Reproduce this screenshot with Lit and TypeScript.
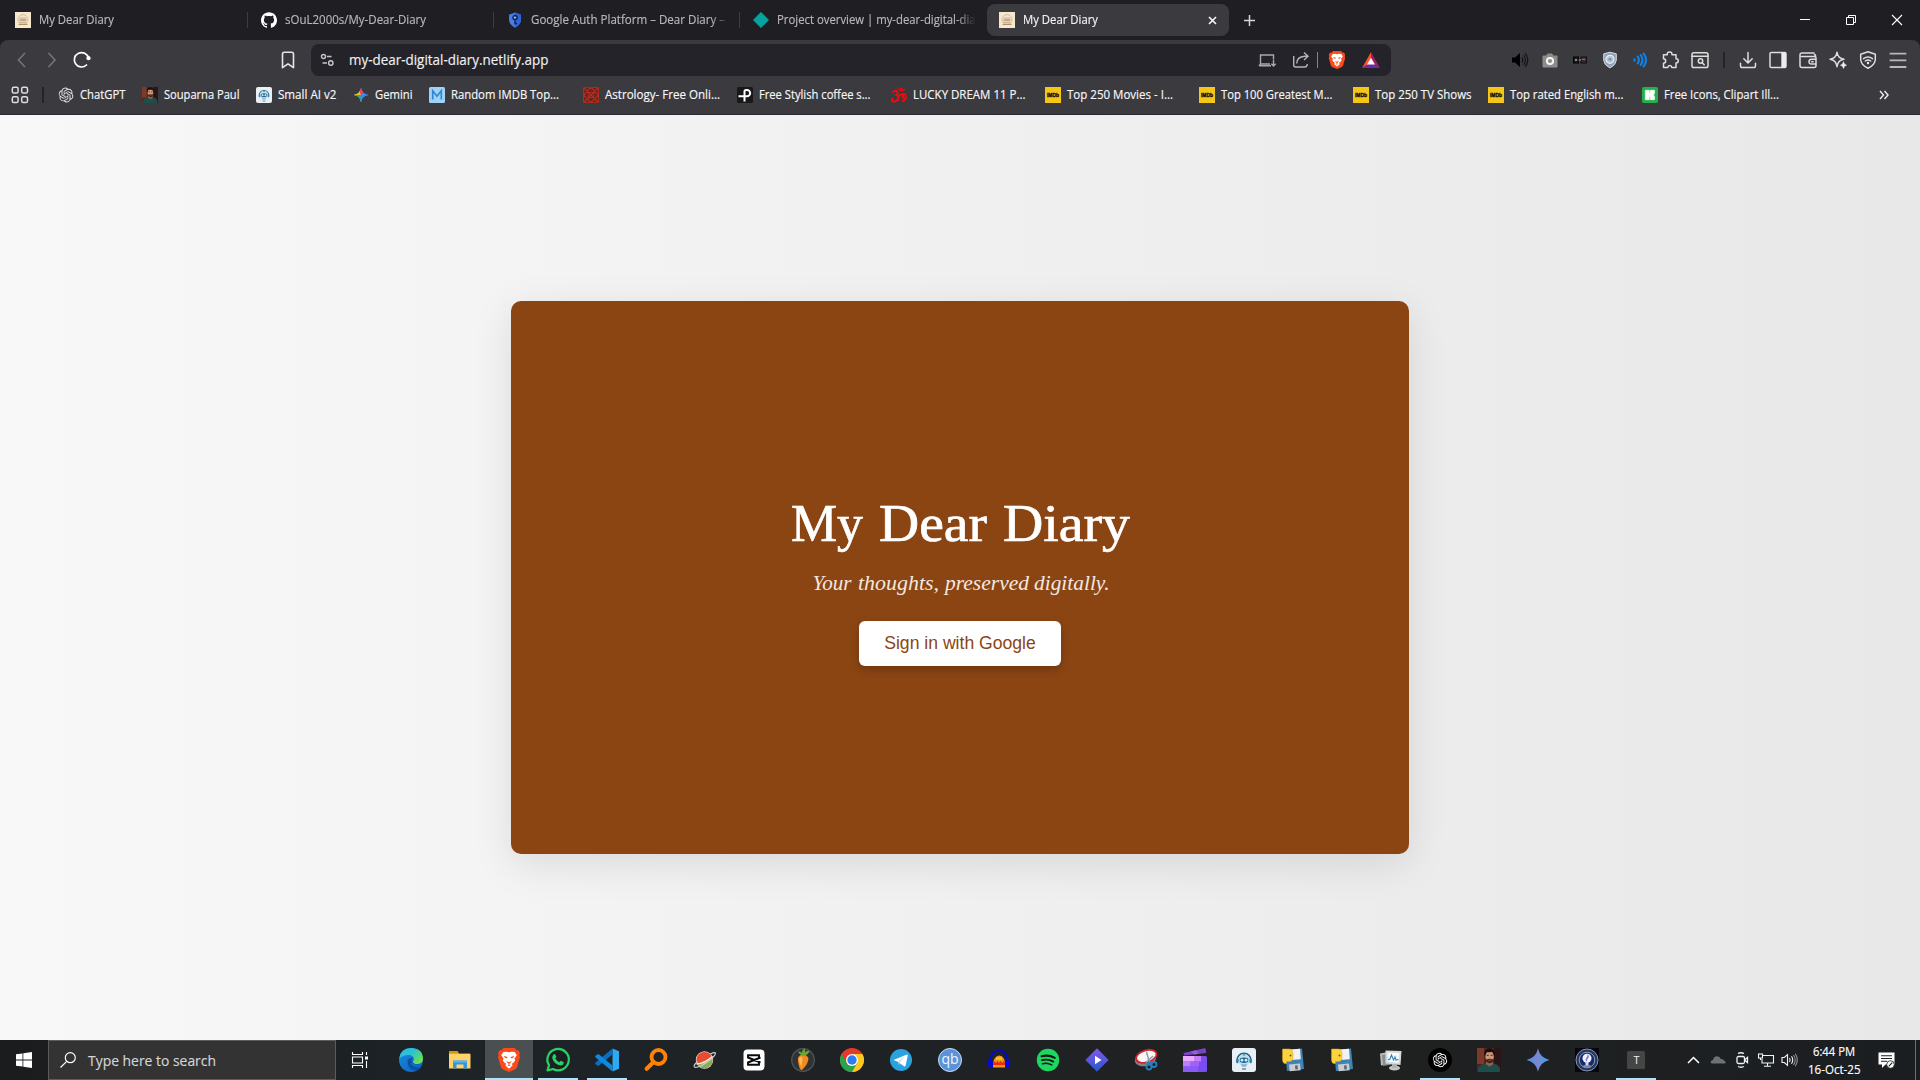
import { LitElement, html, svg, css } from "lit";
import { customElement } from "lit/decorators.js";

const icon = (size: number, box: number, body: unknown) =>
  html`<svg class="ico" width=${size} height=${size} viewBox="0 0 ${box} ${box}">${body}</svg>`;

/* A single line of UI text set to an exact advance width. */
const line = (text: string, width: number, cls = "") =>
  html`<svg class="line ${cls}" width=${width} height="16"><text x="0" y="12" textLength=${width} lengthAdjust="spacingAndGlyphs">${text}</text></svg>`;

const OPENAI =
  "M22.2819 9.8211a5.9847 5.9847 0 0 0-.5157-4.9108 6.0462 6.0462 0 0 0-6.5098-2.9A6.0651 6.0651 0 0 0 4.9807 4.1818a5.9847 5.9847 0 0 0-3.9977 2.9 6.0462 6.0462 0 0 0 .7427 7.0966 5.98 5.98 0 0 0 .511 4.9107 6.051 6.051 0 0 0 6.5146 2.9001A5.9847 5.9847 0 0 0 13.2599 24a6.0557 6.0557 0 0 0 5.7718-4.2058 5.9894 5.9894 0 0 0 3.9977-2.9001 6.0557 6.0557 0 0 0-.7475-7.0729zm-9.022 12.6081a4.4755 4.4755 0 0 1-2.8764-1.0408l.1419-.0804 4.7783-2.7582a.7948.7948 0 0 0 .3927-.6813v-6.7369l2.02 1.1686a.071.071 0 0 1 .038.052v5.5826a4.504 4.504 0 0 1-4.4945 4.4944zm-9.6607-4.1254a4.4708 4.4708 0 0 1-.5346-3.0137l.142.0852 4.783 2.7582a.7712.7712 0 0 0 .7806 0l5.8428-3.3685v2.3324a.0804.0804 0 0 1-.0332.0615L9.74 19.9502a4.4992 4.4992 0 0 1-6.1408-1.6464zM2.3408 7.8956a4.485 4.485 0 0 1 2.3655-1.9728V11.6a.7664.7664 0 0 0 .3879.6765l5.8144 3.3543-2.0201 1.1685a.0757.0757 0 0 1-.071 0l-4.8303-2.7865A4.504 4.504 0 0 1 2.3408 7.872zm16.5963 3.8558L13.1038 8.364 15.1192 7.2a.0757.0757 0 0 1 .071 0l4.8303 2.7913a4.4944 4.4944 0 0 1-.6765 8.1042v-5.6772a.79.79 0 0 0-.407-.667zm2.0107-3.0231l-.142-.0852-4.7735-2.7818a.7759.7759 0 0 0-.7854 0L9.409 9.2297V6.8974a.0662.0662 0 0 1 .0284-.0615l4.8303-2.7866a4.4992 4.4992 0 0 1 6.6802 4.66zM8.3065 12.863l-2.02-1.1638a.0804.0804 0 0 1-.038-.0567V6.0742a4.4992 4.4992 0 0 1 7.3757-3.4537l-.142.0805L8.704 5.459a.7948.7948 0 0 0-.3927.6813zm1.0976-2.3654l2.602-1.4998 2.6069 1.4998v2.9994l-2.5974 1.4997-2.6067-1.4997Z";
const GITHUB =
  "M12 .297c-6.63 0-12 5.373-12 12 0 5.303 3.438 9.8 8.205 11.385.6.113.82-.258.82-.577 0-.285-.01-1.04-.015-2.04-3.338.724-4.042-1.61-4.042-1.61C4.422 18.07 3.633 17.7 3.633 17.7c-1.087-.744.084-.729.084-.729 1.205.084 1.838 1.236 1.838 1.236 1.07 1.835 2.809 1.305 3.495.998.108-.776.417-1.305.76-1.605-2.665-.3-5.466-1.332-5.466-5.93 0-1.31.465-2.38 1.235-3.22-.135-.303-.54-1.523.105-3.176 0 0 1.005-.322 3.3 1.23.96-.267 1.98-.399 3-.405 1.02.006 2.04.138 3 .405 2.28-1.552 3.285-1.23 3.285-1.23.645 1.653.24 2.873.12 3.176.765.84 1.23 1.91 1.23 3.22 0 4.61-2.805 5.625-5.475 5.92.42.36.81 1.096.81 2.22 0 1.606-.015 2.896-.015 3.286 0 .315.21.69.825.57C20.565 22.092 24 17.592 24 12.297c0-6.627-5.373-12-12-12";

/* ---------- shared artwork ---------- */
const robot = svg`
  <rect width="24" height="24" rx="3" fill="#e8f0f6"/>
  <path d="M5 12.500a7 7.300 0 0 1 14 0" fill="none" stroke="#255a7c" stroke-width="1.600"/>
  <circle cx="12" cy="12" r="6" fill="#bfe0f2"/>
  <rect x="4" y="10.500" width="2.600" height="4.800" rx="1.200" fill="#2f87b4"/><rect x="17.400" y="10.500" width="2.600" height="4.800" rx="1.200" fill="#2f87b4"/>
  <path d="M7.800 10.500q4.200-2 8.400 0v3.200q-4.200 2.600-8.400 0z" fill="#2b6488"/>
  <circle cx="10" cy="12.200" r="1.400" fill="#c8f5ff"/><circle cx="14" cy="12.200" r="1.400" fill="#c8f5ff"/>
  <path d="M9 16.300h6l-1 2.500h-4z" fill="#83b5d0"/><circle cx="12" cy="6.700" r="1.200" fill="#54a4cd"/>
  <rect x="10" y="20.500" width="4" height="1" fill="#3b5568"/>`;
const portrait = svg`
  <rect width="24" height="24" fill="#54221d"/>
  <rect width="7" height="16" fill="#7c3a2a"/><rect x="17" width="7" height="24" fill="#2b1517"/>
  <path d="M1 24v-4q2.500-3.500 8-5h6.500q6 1.500 7.500 5v4z" fill="#1f4d49"/>
  <path d="M9.500 12h6.200l.3 4.200-3.300 2.300-3.700-2.300z" fill="#9a6248"/>
  <ellipse cx="12.600" cy="8.700" rx="4.200" ry="5.700" fill="#cf9676"/>
  <path d="M7.300 7.500Q6.800.6 12.600.300 18.300.8 17.600 7.800L16.700 7q-.2-2.300-1-3.200-3 .8-5.800.1-1.400 1-1.500 3.200z" fill="#130e0f"/>
  <path d="M8.500 10.800q1.500 1 2.500.3 1.600-.6 3.200 0 1 .7 2.400-.4-.4 4.300-4 4.500-3.600-.2-4.100-4.400z" fill="#3b241c"/>
  <path d="M9.700 7.300h2M13.600 7.300h2" stroke="#3a2018" stroke-width=".9"/><path d="M11.500 12.300h2.300" stroke="#b9745c" stroke-width=".7"/>`;
const braveLion = svg`
  <path d="M6.500 0h11l2 2.300 1.700-.2 1.800 3-.7 2 .7 2.200-2.700 9.200q-.6 1.800-2 2.800L12 24l-6.300-2.700q-1.400-1-2-2.800L1 9.300l.7-2.200-.7-2 1.800-3 1.700.2z" fill="#fb4a1b"/>
  <path d="M12 4.300l2.500-.5 3.200.3 2.100 3.200-2.400 3.200.8 2-1.800 2.300-1.600 1 .8 1.800-3.600 3.100-3.600-3.100.8-1.800-1.600-1-1.800-2.300.8-2-2.400-3.200 2.100-3.200 3.200-.3z" fill="#fff"/>
  <path d="M6.600 8l3.900.9-.5 1.300-1.900-.1zM17.400 8l-3.900.9.5 1.300 1.900-.1zM9.300 13l2.700 1.200 2.700-1.200-1.500 2.300-1.200.8-1.200-.8zM10.200 17.300l1.800-1 1.800 1-1.800.8z" fill="#fb4a1b"/>`;
const diaryIcon = svg`
  <rect width="16" height="16" fill="#f6e8cf"/>
  <circle cx="8" cy="7.600" r="5" fill="none" stroke="#cdb494" stroke-width=".9"/>
  <path d="M4.800 6.600q1.500-2 3.200-.6 1.700-1.400 3.200.6v2.500H4.800z" fill="#e0cbb0" stroke="#b99d7b" stroke-width=".5"/>
  <path d="M5.200 8h5.600M3.600 12.500h8.800" stroke="#b08f69" stroke-width="1"/><path d="M4.500 10.800h7" stroke="#c7ab86" stroke-width="1.200"/>`;
const imdb = svg`<rect width="16" height="16" fill="#f5c518"/><text x="8" y="10.300" text-anchor="middle" textLength="12" lengthAdjust="spacingAndGlyphs" class="imdb">IMDb</text>`;
const star4 = "M12 0Q13.500 10.500 24 12 13.500 13.500 12 24 10.500 13.500 0 12 10.500 10.500 12 0z";

/* ---------- tab strip ---------- */
const tabs = [
  { label: "My Dear Diary", w: 75, art: icon(16, 16, diaryIcon) },
  { label: "sOuL2000s/My-Dear-Diary", w: 141, art: icon(16, 24, svg`<path fill="#fff" d=${GITHUB}/>`) },
  { label: "Google Auth Platform – Dear Diary –", w: 194, art: icon(16, 16, svg`
      <path d="M8 .5l6 2.200v4.600q0 5.500-6 8.400-6-2.900-6-8.400V2.700z" fill="#4a7be8"/><path d="M8 .5l6 2.200v4.600q0 5.500-6 8.400z" fill="#2f63d6"/>
      <circle cx="8" cy="5.600" r="2.100" fill="none" stroke="#16244a" stroke-width="1.300"/><path d="M8 7.500v5M8 11.500h2" stroke="#16244a" stroke-width="1.400"/><circle cx="8" cy="5.600" r=".8" fill="#c7d8ff"/>`) },
  { label: "Project overview | my-dear-digital-diary", w: 209, art: icon(16, 16, svg`<path d="M8 .3L15.700 8 8 15.700.3 8z" fill="#05a4a0" stroke="#05a4a0" stroke-linejoin="round" stroke-width=".6"/>`) },
  { label: "My Dear Diary", w: 75, art: icon(16, 16, diaryIcon), active: true },
];

/* ---------- bookmarks ---------- */
const bookmarks = [
  { label: "ChatGPT", w: 45.5, slot: 84, art: icon(16, 26, svg`<path transform="translate(1 1)" fill="#e8e8ea" d=${OPENAI}/>`) },
  { label: "Souparna Paul", w: 75.5, slot: 114, art: icon(16, 24, portrait) },
  { label: "Small AI v2", w: 58.5, slot: 97, art: icon(16, 24, robot) },
  { label: "Gemini", w: 37.5, slot: 76, art: icon(16, 26, svg`
      <defs><clipPath id="g1"><path d=${star4}/></clipPath></defs>
      <g transform="translate(1 1)" clip-path="url(#g1)"><rect width="24" height="24" fill="#3f83f5"/><path d="M0 0h9l3 12-12 2z" fill="#f6bf2a"/><path d="M7 0h10v6l-5 6z" fill="#f0473c"/><path d="M0 12l11 0 3 12H4z" fill="#2fae5b"/><path d="M12 11l12-8v20h-13z" fill="#3f83f5"/></g>`) },
  { label: "Random IMDB Top...", w: 108, slot: 154, art: icon(16, 16, svg`<rect width="16" height="16" rx="1.500" fill="#9fd2f8"/><path d="M3.700 12.500V3.700L8 9.200l4.300-5.500v8.800" fill="none" stroke="#2f86cf" stroke-width="1.600"/>`) },
  { label: "Astrology- Free Onli...", w: 115, slot: 154, art: icon(16, 16, svg`<rect width="16" height="16" fill="#5f2320"/><path d="M.7.700h14.600v14.600H.7zM.7.700l14.600 14.600M15.300.700L.7 15.300M8 .7L15.300 8 8 15.300.7 8z" fill="none" stroke="#b92f1f" stroke-width="1.100"/><circle cx="8" cy="8" r="3" fill="none" stroke="#b92f1f"/>`) },
  { label: "Free Stylish coffee s...", w: 111.5, slot: 154, art: icon(16, 16, svg`<rect width="16" height="16" rx="1.500" fill="#18171a"/><path d="M7.500 14.500V4.500q0-1.500 1.500-1.500h1a3 3 0 0 1 0 6.300H1.500" fill="none" stroke="#fff" stroke-width="2"/>`) },
  { label: "LUCKY DREAM 11 P...", w: 112.5, slot: 154, art: icon(16, 16, svg`<g fill="none" stroke="#f80808" stroke-width="2" stroke-linecap="round"><path d="M2 5q1.500-2 3.500-1t.5 3.500L4.500 8Q8 8 7.500 11T3.500 14.500 1.200 11.500"/><path d="M7.500 9.300Q9 7 11 7.200t.6 3.300"/><path d="M11.300 7.500Q14.500 6 14.800 9t-2.800 5"/><path d="M7.500 2q2 3 6 .5" stroke-width="1.300"/></g><circle cx="10.300" cy="1.400" r="1.200" fill="#f80808"/>`) },
  { label: "Top 250 Movies - I...", w: 106, slot: 154, art: icon(16, 16, imdb) },
  { label: "Top 100 Greatest M...", w: 111.5, slot: 154, art: icon(16, 16, imdb) },
  { label: "Top 250 TV Shows", w: 96.5, slot: 135, art: icon(16, 16, imdb) },
  { label: "Top rated English m...", w: 113.5, slot: 154, art: icon(16, 16, imdb) },
  { label: "Free Icons, Clipart Ill...", w: 115, slot: 154, art: icon(16, 16, svg`<rect width="16" height="16" rx="1.800" fill="#22b14a"/><path d="M3.300 3.300h4v3.200q.8-.3 1-1.500V3.300H12.500v3.200l-1 1.500 1 1.500v3.200H8.300V11q-.2-1.200-1-1.500v3.200h-4z" fill="#fff" stroke="#fff" stroke-width=".6" stroke-linejoin="round"/>`) },
];

/* ---------- toolbar extensions ---------- */
const ext = [
  icon(18, 18, svg`<path d="M1 6.500h3L9 2v14l-5-4.500H1z" fill="#000"/><path d="M10.800 6.300q2 2.700 0 5.400M12.600 4q3.700 5 0 10M14.200 2q5.300 7 0 14" fill="none" stroke="#111" stroke-width="1.100"/>`),
  icon(18, 18, svg`<path d="M6.500 3h4.500l1 2h4v11H2V5h3.500z" fill="#8d8c8b" stroke="#8d8c8b" stroke-linejoin="round"/><circle cx="9" cy="10" r="3.100" fill="none" stroke="#f5f5f5" stroke-width="2"/>`),
  icon(18, 18, svg`<rect x="2.500" y="6" width="5" height="6" fill="#1e1d20" stroke="#000"/><rect x="4" y="8" width="2" height="2" fill="#888"/><rect x="10" y="6" width="5.500" height="6" fill="#3d2528" stroke="#111"/><path d="M10.800 8.300h3.500" stroke="#777" stroke-width="1.200"/><path d="M7.500 9H10" stroke="#a7a7a7"/>`),
  icon(18, 18, svg`<path d="M9 1.200l6.300 1.600v6.400Q15 14 9 17 3 14 2.700 9.200V2.800z" fill="#93a2b9" stroke="#d4dbe4" stroke-width="1"/><circle cx="9" cy="8.300" r="4" fill="#b6c3d4" stroke="#e7edf4" stroke-width="1.200"/><circle cx="9" cy="8.300" r="1.500" fill="#8192ad"/>`),
  icon(18, 18, svg`<g fill="none" stroke="#0b84f0" stroke-width="2.100" stroke-linecap="round"><path d="M3.500 8.300v1.500M6.700 5.500q2.300 3.500 0 7M9.700 4q3.500 5 0 10M12.600 2.500q4.800 6.500 0 13"/></g>`),
  icon(18, 18, svg`<path class="st" d="M3 3.700h3.300Q6 .9 8.600.9t2.300 2.800H15v4q2.300 0 2.300 2.100T15 12v4.500h-4.200q-.2-1.900-2-1.900t-2 1.900H2.500v-4.200q2.200-.3 2.200-2.300T2.500 7.800V3.700z"/>`),
  icon(18, 18, svg`<rect class="st" x="1" y="1.800" width="16" height="14.700" rx="1.800"/><path class="st" d="M1 5.300h16"/><circle class="st" cx="9.500" cy="10" r="2.200"/><path class="st" d="M11.200 11.700l2 2"/>`),
];
const tools = [
  icon(18, 18, svg`<path class="st" d="M9 1.500v10.300M4.800 7.700L9 12l4.200-4.300M1.500 12.300v2.400q0 1.800 1.800 1.800h11.400q1.800 0 1.800-1.800v-2.400"/>`),
  icon(18, 18, svg`<rect class="st" x="1" y="1.500" width="16" height="15" rx="1.200"/><path d="M12.300 1.500h4.700v15h-4.700z" fill="#ececee"/>`),
  icon(18, 18, svg`<path class="st" d="M16.500 6V4.500q0-1-1-1M15 2H3.200Q1 2 1 4v10.500q0 2 2 2h12q2 0 2-2V7q0-1.500-1.500-1.500H2.500M17 8.300h-4.500q-2.500 0-2.500 2.400t2.500 2.400H17M12.600 10.700h1.500"/>`),
  icon(18, 18, svg`<path class="st" d="M8 1.200q.8 6.200 7 7-6.200.8-7 7.500-.8-6.700-7-7.500 6.200-.8 7-7z"/><path d="M14.500 10.700q.3 3 3 3.500-2.700.5-3 3.300-.3-2.800-3-3.300 2.700-.5 3-3.500z" fill="#eee" stroke="#eee" stroke-width=".6"/>`),
  icon(18, 18, svg`<path class="st" d="M9 .8l7.300 2.500v5.200Q16 14 9 17.200 2 14 1.700 8.500V3.300z"/><path class="st" d="M4.500 7.600q4.500-3.300 9 0M6.300 10q2.700-2 5.400 0"/><circle cx="9" cy="12" r="1.200" fill="#eee"/>`),
  icon(18, 18, svg`<path d="M.7 2.700h16.600M.7 9.300h16.600M.7 16h16.600" stroke="#b9b9bd" stroke-width="1.800"/>`),
];

/* ---------- taskbar ---------- */
const party = svg`
  <path d="M4 2l17-1.500L23 21 6 23z" fill="#3f83b6"/><path d="M9 1.500l10-.8.8 10.500-10 .9z" fill="#f1f2f3"/>
  <path d="M8 16.500l11-1 .7 6.700-11 1z" fill="#c8ccd0"/><path d="M14 17.500l2.500-.2.400 4-2.500.3z" fill="#56677a"/>
  <path d="M1.500 1h6.500q4 0 4 4.500v4q0 4-4 4H5.500v2H3.500Q1.500 15 1.500 11z" fill="#fcd33d" stroke="#d6a51c" stroke-width=".5"/><circle cx="9.500" cy="7.500" r="1" fill="#6d5313"/>`;

const apps: { art: unknown; run?: boolean; focus?: boolean }[] = [
  { art: icon(24, 24, svg`
      <defs><linearGradient id="e1" x1="0" y1="0" x2="1" y2=".7"><stop offset="0" stop-color="#32b7ee"/><stop offset=".5" stop-color="#2cc3cf"/><stop offset="1" stop-color="#6fe04b"/></linearGradient>
      <linearGradient id="e2" x1="0" y1="0" x2="1" y2="1"><stop offset="0" stop-color="#1790dd"/><stop offset="1" stop-color="#0b5ebc"/></linearGradient></defs>
      <circle cx="12" cy="12" r="12" fill="url(#e2)"/>
      <path d="M.3 10.500Q1.500 0 12 0q11.500 0 12 10.500 0 5.300-5.300 5.500-4.500.3-5-2 1.200-1 1.200-3Q14.500 7 9.500 7 4 7 .3 10.500z" fill="url(#e1)"/>
      <path d="M8.500 13.500q0 9 9.500 9 2.500-1 4.800-4Q18 20.600 14 18q-3-2.300-.8-5l.5 1Q14 16.300 19 16q-5 1-6.500-2-1-2 1.500-4Q9 9.500 8.500 13.500z" fill="#0d4fa6"/>`) },
  { art: icon(24, 24, svg`<path d="M1 3h8.500L11 5.500h11V20H1z" fill="#e9a71c"/><path d="M1 6h21.500v14.500H1z" fill="#fdd465"/><path d="M1 3h8l1 2H1z" fill="#d9920c"/><path d="M5 12.500h14V20.500h-3.500v-4h-7v4H5z" fill="#3a94d9"/><path d="M5 12.500h14v1.800H5z" fill="#67b8ea"/>`) },
  { art: icon(24, 24, braveLion), run: true, focus: true },
  { art: icon(24, 24, svg`<path d="M1.500 22.500L3 17.200A10.700 10.700 0 1 1 7 21z" fill="#1d2023" stroke="#28d366" stroke-width="2.200" stroke-linejoin="round"/><path d="M7.500 6.500q1.200-1 1.800 0l1 2.300q0 .7-1 1.700 1.500 2.700 4.200 3.800l1.300-1.500 2.700 1.300q.7 3-2.500 3.300Q8 16.500 6.300 10.200q-.2-2.200 1.200-3.700z" fill="#28d366"/>`), run: true },
  { art: icon(24, 24, svg`<path d="M17.500.5L24 3.300v17.400l-6.500 2.800z" fill="#2ea9f2"/><path d="M17.500.5v6L3.500 18 .3 16.200v-1.500z" fill="#0a6fc0"/><path d="M17.500 23.500v-6L3.500 6 .3 7.800v1.500z" fill="#1088db"/>`), run: true },
  { art: icon(24, 24, svg`<circle cx="14.500" cy="9" r="7" fill="none" stroke="#ff8106" stroke-width="3.800"/><path d="M9.500 14L2.700 20.700" stroke="#ff8106" stroke-width="4.200" stroke-linecap="round"/>`) },
  { art: icon(24, 24, svg`<circle cx="11.500" cy="12" r="8.700" fill="#d8dcdc"/><circle cx="11.500" cy="12" r="8" fill="#ea4a30"/><path d="M4.500 16Q12 15 19 9.500q1.500 9-7.500 10.500Q6.500 20 4.500 16z" fill="#86b04a"/><path d="M3.500 16q8-.5 16-7.500" stroke="#f4f1e9" stroke-width="1.600" fill="none"/><path d="M4.500 13.500Q0 17.500 1.500 19q3 1.500 12-4.500T22.500 5q-1.200-1.200-5 1" fill="none" stroke="#c9ced2" stroke-width="1.200"/>`) },
  { art: icon(24, 24, svg`<rect x="1.500" y="1.500" width="21" height="21" rx="4" fill="#fff"/><path d="M17 9.300V7.300H6v2.200l12.500 5M17 14.700v2H6v-2.200l12.500-5" fill="none" stroke="#0b0b0b" stroke-width="1.900"/>`) },
  { art: icon(24, 24, svg`<circle cx="12" cy="12" r="11.300" fill="#303336" stroke="#51565a" stroke-width="1.200"/><path d="M7 9.500q2.300-3.500 6-3 4 1 4.500 4.500-1 6-6.500 11-1.500 0-2.200-1.500Q6.500 14 7 9.500z" fill="#f28a20"/><path d="M10 8.500q2 0 1.300 4.500T11 20Q8 14 8 10.500z" fill="#ffbb55"/><path d="M12 8Q7.500 5.500 7 3.500q3-.5 4 1.500Q11 1.500 13.500.500q1 2 .3 4Q16 2 18.500 3q-1 4-6.500 5z" fill="#69a82e"/>`) },
  { art: icon(24, 24, svg`<circle cx="12" cy="12" r="12" fill="#e5392c"/><path d="M1.600 6A12 12 0 0 0 12 24l5.200-9-5.200 2.500-5.200-2.500z" fill="#28a44b"/><path d="M22.400 6A12 12 0 0 1 12 24l5.200-9L17.500 9 12 6z" fill="#fcc91f"/><circle cx="12" cy="12" r="6" fill="#fff"/><circle cx="12" cy="12" r="4.700" fill="#2c7bf0"/>`) },
  { art: icon(24, 24, svg`<circle cx="12" cy="12" r="11" fill="#2ba2dd"/><path d="M4.500 12L18 6.500q1 0 .8 1L16.500 18q-.5.8-1.500.2L8.700 13.700z" fill="#fff"/><path d="M9 13.500l7-5-5.500 6-.5 3.200z" fill="#b8dcf0"/>`) },
  { art: icon(24, 24, svg`<circle cx="12" cy="12" r="11.500" fill="#5c93d8" stroke="#c7ddf6" stroke-width="1"/><text x="12" y="16" text-anchor="middle" class="qb">qb</text>`) },
  { art: icon(24, 24, svg`<path d="M3.500 15V11a8.500 8.500 0 0 1 17 0v4" fill="none" stroke="#0909c9" stroke-width="2.200"/><path d="M5.500 19.500Q6 8 12 7.500T18.500 19.500z" fill="#ef9819"/><path d="M6 15l1.500-2L9 15l1.500-2.500L12 15l1.500-2.500L15 15l1.500-2L18 15v2H6z" fill="#ee2b10"/><path d="M9 9.500h6v2H9z" fill="#ffc928"/><path d="M1.500 12q3 0 4.500 2v6H2.500Q-.5 16 1.500 12zM22.500 12q-3 0-4.500 2v6h3.500q3-4 1-8z" fill="#0808e0"/>`) },
  { art: icon(24, 24, svg`<circle cx="12" cy="12" r="11.200" fill="#1ed760"/><g fill="none" stroke="#111a14" stroke-linecap="round"><path d="M5.500 8.300q7-2 13.300 1.500" stroke-width="2.100"/><path d="M6 12.200q6-1.600 11.300 1.400" stroke-width="1.800"/><path d="M6.500 15.700q5-1.300 9.300 1.200" stroke-width="1.500"/></g>`) },
  { art: icon(24, 24, svg`<defs><linearGradient id="mp" x1="0" y1="0" x2="0" y2="1"><stop offset="0" stop-color="#8457ea"/><stop offset="1" stop-color="#2559cf"/></linearGradient></defs><path d="M12 .8L23.200 12 12 23.200.8 12z" fill="url(#mp)" stroke="url(#mp)" stroke-linejoin="round"/><path d="M10 7.800l6.500 4.200-6.500 4.200z" fill="#fff"/>`) },
  { art: icon(24, 24, svg`<ellipse cx="11.500" cy="11" rx="11" ry="7" transform="rotate(-15 11.500 11)" fill="#7e8185"/><ellipse cx="12.300" cy="8.300" rx="10.500" ry="6" transform="rotate(-17 12.300 8.300)" fill="#f6f7f9" stroke="#d3232d" stroke-width="1.800"/><path d="M12.500 4l3.500 12M19 8l-7 6.500" stroke="#8e9da8" stroke-width="1.500"/><circle cx="15" cy="19" r="2.500" fill="none" stroke="#287fb9" stroke-width="1.800"/><circle cx="20" cy="16.500" r="2.500" fill="none" stroke="#287fb9" stroke-width="1.800"/><path d="M14 15l4 .5" stroke="#287fb9" stroke-width="2.500"/>`) },
  { art: icon(24, 24, svg`<path d="M.3 5L21.500.3q1-.2 1.200.8l.5 4L1.500 7.500z" fill="#7a44c8"/><path d="M8 3.400l5-1.100 3 3.500-5 .7z" fill="#a05adf"/><rect y="8" width="24" height="16" rx="1.500" fill="#7a4df0"/><path d="M0 8h11v5.500H0z" fill="#eba9ff"/><path d="M11 8h7v5.500h-7z" fill="#c37ff7"/><path d="M0 13.500h7v5H0z" fill="#bb82fa"/><path d="M7 13.500h9v5H7z" fill="#a163f5"/><path d="M0 18.500h15V24H0z" fill="#8c5af5"/>`) },
  { art: icon(24, 24, robot) },
  { art: icon(24, 24, party) },
  { art: icon(24, 24, party) },
  { art: icon(24, 24, svg`<path d="M1 5.500l8-1.500 1 12-8 1.500z" fill="#b9bcbe"/><path d="M3 7l9-1.500 1 11-9 1.500z" fill="#8b8f92"/><path d="M6.500 2.500l16 .5-1 14-15-1.500z" fill="#d6d9da"/><path d="M8.500 4.500l12 .4-.8 9.800-11-1z" fill="#f4fafd"/><path d="M9 12l2-1 1.500-4 2 5 1.500-3 1 3 2.500-.5" fill="none" stroke="#2d7fc2" stroke-width="1.100"/><ellipse cx="15.500" cy="20" rx="5.500" ry="2.600" fill="#c3c6c8"/><path d="M13 16h5v4h-5z" fill="#aeb2b5"/>`) },
  { art: icon(24, 24, svg`<circle cx="12" cy="12" r="12" fill="#000"/><path transform="translate(4.800 4.800) scale(.6)" fill="#fff" d=${OPENAI}/>`), run: true },
  { art: icon(24, 24, portrait) },
  { art: icon(24, 24, svg`<defs><linearGradient id="g2" x1="0" y1="0" x2="1" y2="0"><stop offset=".1" stop-color="#4f8fe6"/><stop offset=".45" stop-color="#7e86cf"/><stop offset=".9" stop-color="#3fa3ee"/></linearGradient></defs><path d="M12 .5Q14 9.800 23.500 12 14 14.200 12 23.500 10 14.200.5 12 10 9.800 12 .500z" fill="url(#g2)"/>`) },
  { art: icon(24, 24, svg`<rect width="24" height="24" fill="#05070d"/><circle cx="12" cy="12" r="11" fill="#24375f" stroke="#8896b0" stroke-width="1"/><circle cx="12" cy="12" r="7.800" fill="#1b2a66" stroke="#aab7d2" stroke-width=".8"/><circle cx="12" cy="10.300" r="4.500" fill="#eef2ff"/><path d="M12.500 6.500q2.500 1.500.5 3.700t-1 3.500q-2.500-1.700-.8-3.500T12.500 6.500z" fill="#7b6fe0"/><path d="M11 14h2v3h-2zM8.500 18h7" stroke="#cdd6ee" stroke-width="1" fill="#cdd6ee"/>`) },
  { art: icon(24, 24, svg`<rect x="3" y="3" width="18" height="18" rx="1.500" fill="#454545"/><text x="12.500" y="16" text-anchor="middle" class="tee">T</text>`), run: true },
];

@customElement("app-root")
export class AppRoot extends LitElement {
  static styles = css`
    :host { display: block; }
    * { box-sizing: border-box; }
    .screen { width: 1920px; height: 1080px; display: flex; flex-direction: column; overflow: hidden; background: #1f1e23; font-family: "Open Sans", "Noto Sans", sans-serif; }
    .ico { display: block; flex: none; overflow: visible; }
    .line { display: block; flex: none; overflow: visible; fill: currentColor; stroke: currentColor; stroke-width: .15; font-size: 11.8px; }
    .st { fill: none; stroke: #dededf; stroke-width: 1.5; stroke-linejoin: round; stroke-linecap: round; }
    .imdb { font: 900 6px "Liberation Sans", sans-serif; fill: #111; stroke: #111; stroke-width: .4; }
    .qb { font: 14px "Open Sans", sans-serif; fill: #f1f6fd; }
    .tee { font: 11px "Open Sans", sans-serif; fill: #eee; }

    .tabs { height: 40px; display: flex; padding: 4px 0 4px 3px; flex: none; }
    .tab { width: 242px; height: 32px; margin-right: 4px; padding-left: 12px; display: flex; align-items: center; gap: 7.500px; color: #b9b8bc; border-radius: 8px; position: relative; }
    .tab.rule::after { content: ""; position: absolute; right: -3px; top: 8px; width: 1px; height: 16px; background: #3d3c42; }
    .tab.active { background: #3b3a3f; color: #f1f1f2; }
    .label { width: 198px; overflow: hidden; -webkit-mask-image: linear-gradient(to right, #000 180px, transparent 199px); }
    .active .label { width: 178px; }
    .plus { margin: 11px 0 0 11px; }
    .win { margin-left: auto; display: flex; }
    .win > div { width: 46px; display: flex; justify-content: center; align-items: center; }

    .chrome { height: 75px; flex: none; background: #3b3a3f; border-radius: 8px 8px 0 0; border-bottom: 1px solid #2b2a2e; }
    .toolbar { height: 40px; padding: 4px 7px 4px 13px; display: flex; align-items: center; }
    .nav { display: flex; width: 266px; align-items: center; gap: 12px; }
    .url { width: 1080px; height: 32px; margin-left: 14px; border-radius: 8px; background: #242329; display: flex; align-items: center; padding-left: 9px; color: #f0f0f1; }
    .addr { font-size: 13.800px; margin: 2px 0 0 13px; }
    .actions { margin-left: auto; display: flex; align-items: center; padding-right: 11px; }
    .vr { width: 1px; height: 16px; background: #858489; margin: 0 10px 0 7px; }
    .cast { margin-right: 16px; }
    .bat { margin-left: 16px; }
    .exts { display: flex; margin-left: auto; align-items: center; }
    .slot { width: 30px; display: flex; justify-content: center; }
    .gap { width: 18px; display: flex; justify-content: center; }
    .bar { width: 2px; height: 16px; background: #242329; }

    .marks { height: 34px; display: flex; align-items: center; padding: 0 0 4px 11px; color: #f8f8f9; }
    .apps-grid { margin-right: 13px; }
    .marks .bar { margin-right: 14px; }
    .bm { display: flex; gap: 6px; align-items: center; }
    .more { margin-left: 83px; }

    .page { flex: 1; display: flex; align-items: center; justify-content: center; background: linear-gradient(to right, #f8f8f8, #e8e8e8); }
    .card { width: 898px; height: 553px; border-radius: 10px; background: #8b4513; box-shadow: 0 10px 40px rgba(0, 0, 0, .1); display: flex; flex-direction: column; align-items: center; padding-top: 190px; }
    .title { display: block; height: 72px; overflow: visible; font: 53.500px "Liberation Serif", serif; fill: #fff; stroke: #fff; stroke-width: .7; }
    .tag { display: block; height: 38px; overflow: visible; font: italic 22px "Liberation Serif", serif; fill: #f3e8e0; }
    .signin { margin-top: 20px; width: 202px; height: 45px; border: 0; border-radius: 6px; background: #fff; color: #8b4513; font: 17.600px "Liberation Sans", Arial, sans-serif; box-shadow: 0 4px 10px rgba(0, 0, 0, .2); padding: 0; text-align: center; }

    .taskbar { height: 40px; flex: none; display: flex; background: linear-gradient(to right, #1b1c1e, #1d2327 25%, #1f2224 50%, #1f2121 75%, #1b1e21); color: #fff; }
    .start { width: 48px; display: flex; justify-content: center; align-items: center; }
    .search { width: 288px; border: 1px solid #5c5c5c; background: #333; display: flex; align-items: center; padding-left: 11px; gap: 12px; color: #d6d6d6; }
    .search .line { font-size: 15px; margin-top: 3px; }
    .view { width: 51px; padding-left: 16px; display: flex; align-items: center; }
    .app { width: 48px; margin-right: 1px; display: flex; align-items: center; justify-content: center; position: relative; }
    .app.focus { background: #4a4f52; }
    .app.run::after { content: ""; position: absolute; left: 4px; right: 4px; bottom: 0; height: 2px; background: #a9e6f9; }
    .app.focus::after { left: 0; right: 0; }
    .tray { display: flex; align-items: center; margin-left: 25px; gap: 8px; }
    .clock { width: 54px; margin-left: 9px; display: flex; flex-direction: column; align-items: center; gap: 2px; padding-top: 4px; }
    .note { margin-left: 17px; align-self: center; }
    .peek { margin-left: auto; width: 5px; border-left: 1px solid #6d6f70; }
  `;

  render() {
    return html`<div class="screen">
      <div class="tabs">
        ${tabs.map((t, i) => html`<div class="tab ${t.active ? "active" : ""} ${i < 3 ? "rule" : ""}">
          ${t.art}<div class="label">${line(t.label, t.w)}</div>
          ${t.active ? html`<svg class="ico" width="9" height="9" viewBox="0 0 9 9"><path d="M1 1l7 7M8 1L1 8" stroke="#f4f4f4" stroke-width="1.700"/></svg>` : ""}
        </div>`)}
        <svg class="ico plus" width="11" height="11" viewBox="0 0 11 11"><path d="M5.500 0v11M0 5.500h11" stroke="#d5d5d7" stroke-width="1.500"/></svg>
        <div class="win">
          <div>${icon(10, 10, svg`<path d="M0 4.500h10" stroke="#fff"/>`)}</div>
          <div>${icon(10, 10, svg`<path d="M.5 2.500h7v7h-7zM2.500 2.500v-2h7v7h-2" fill="none" stroke="#fff"/>`)}</div>
          <div>${icon(10, 10, svg`<path d="M0 0l10 10M10 0L0 10" stroke="#fff" stroke-width="1.100"/>`)}</div>
        </div>
      </div>

      <div class="chrome">
        <div class="toolbar">
          <div class="nav">
            ${icon(18, 18, svg`<path d="M12 2L5.500 9 12 16" fill="none" stroke="#77767b" stroke-width="1.500"/>`)}
            ${icon(18, 18, svg`<path d="M5.500 2L12 9l-6.500 7" fill="none" stroke="#77767b" stroke-width="1.500"/>`)}
            ${icon(18, 18, svg`<path d="M15.500 7A7.200 7.200 0 1 0 13.500 14" fill="none" stroke="#fff" stroke-width="1.700" stroke-linecap="round"/><circle cx="15.500" cy="7.200" r="2.100" fill="#fff"/>`)}
          </div>
          ${icon(18, 18, svg`<path d="M3.500 3q0-1.800 1.800-1.800h7.400q1.800 0 1.800 1.800v13.700L9 12.800l-5.500 3.900z" fill="none" stroke="#e6e6e8" stroke-width="1.600" stroke-linejoin="round"/>`)}
          <div class="url">
            ${icon(16, 16, svg`<g fill="none" stroke="#c7c7ca" stroke-width="1.400"><circle cx="3.500" cy="4.500" r="2"/><path d="M7 4.500H11.500M2.500 11H7"/><circle cx="10.800" cy="11" r="2.200"/></g>`)}
            ${line("my-dear-digital-diary.netlify.app", 199.5, "addr")}
            <div class="actions">
              <div class="cast">${icon(18, 18, svg`<g fill="none" stroke="#a9a8ad" stroke-width="1.400"><path d="M12 13H2.500V4h13v4.500M1 14.700h12M2.500 13L1 15M15.500 9v6M13.300 12.800l2.200 2.200 2.200-2.200"/></g>`)}</div>
              ${icon(18, 18, svg`<g fill="none" stroke="#b4b3b8" stroke-width="1.400"><path d="M1.700 5v9q0 2 2 2h9q2 0 2.500-2v-1"/><path d="M4.700 12.500q0-6.500 8-7.200h3M12 1.500l4 3.800L12 9"/></g>`)}
              <div class="vr"></div>
              ${icon(18, 24, braveLion)}
              <div class="bat">${icon(18, 18, svg`<path d="M9 1L0 17l9-5z" fill="#ff4f2b"/><path d="M9 1l9 16-9-5z" fill="#9b1f64"/><path d="M0 17h18l-9-6z" fill="#6a2ba5"/><path d="M9 6.700l4 6.800H5z" fill="#fff"/>`)}</div>
            </div>
          </div>
          <div class="exts">
            ${ext.map((e) => html`<div class="slot">${e}</div>`)}
            <div class="gap"><div class="bar"></div></div>
            ${tools.map((e) => html`<div class="slot">${e}</div>`)}
          </div>
        </div>
        <div class="marks">
          <div class="apps-grid">${icon(18, 18, svg`<g class="st"><rect x="1.300" y="1.300" width="5.800" height="5.800" rx="1.600"/><rect x="10.700" y="1.300" width="5.800" height="5.800" rx="1.600"/><rect x="1.300" y="10.700" width="5.800" height="5.800" rx="1.600"/><rect x="10.700" y="10.700" width="5.800" height="5.800" rx="1.600"/></g>`)}</div>
          <div class="bar"></div>
          ${bookmarks.map((b) => html`<div class="bm" style="width:${b.slot}px">${b.art}${line(b.label, b.w)}</div>`)}
          <div class="more">${icon(10, 10, svg`<path d="M1 1l3.500 4L1 9M5.500 1L9 5 5.500 9" fill="none" stroke="#eee" stroke-width="1.400"/>`)}</div>
        </div>
      </div>

      <div class="page">
        <div class="card">
          <svg class="title" width="338">
            <text y="50"><tspan x="0" textLength="72" lengthAdjust="spacingAndGlyphs">My</tspan><tspan x="88" textLength="108" lengthAdjust="spacingAndGlyphs">Dear</tspan><tspan x="212" textLength="127" lengthAdjust="spacingAndGlyphs">Diary</tspan></text>
          </svg>
          <svg class="tag" width="292">
            <text y="27"><tspan x="-1.500" textLength="39" lengthAdjust="spacingAndGlyphs">Your</tspan><tspan x="44" textLength="81" lengthAdjust="spacingAndGlyphs">thoughts,</tspan><tspan x="131" textLength="84" lengthAdjust="spacingAndGlyphs">preserved</tspan><tspan x="220" textLength="75.500" lengthAdjust="spacingAndGlyphs">digitally.</tspan></text>
          </svg>
          <button class="signin">Sign in with Google</button>
        </div>
      </div>

      <div class="taskbar">
        <div class="start">${icon(16, 16, svg`<path d="M0 2.300l6.500-.9v6.200H0zM7.300 1.300L16 0v7.600H7.300zM0 8.400h6.500v6.200L0 13.700zM7.300 8.400H16V16l-8.700-1.300z" fill="#fff"/>`)}</div>
        <div class="search">
          ${icon(16, 16, svg`<circle cx="10.300" cy="5.700" r="5" fill="none" stroke="#fff" stroke-width="1.200"/><path d="M6.700 9.300L.5 15.500" stroke="#fff" stroke-width="1.200"/>`)}
          ${line("Type here to search", 128, "")}
        </div>
        <div class="view">${icon(16, 16, svg`<path d="M.5 0v2.500h10V0M.5 16v-2.500h10V16M.5 5h10v6H.5zM14.500 0v3M14.500 9v7" fill="none" stroke="#fff" stroke-width="1.100"/><rect x="13" y="4.500" width="3" height="3" fill="#fff"/>`)}</div>
        ${apps.map((a) => html`<div class="app ${a.run ? "run" : ""} ${a.focus ? "focus" : ""}">${a.art}</div>`)}
        <div class="tray">
          ${icon(16, 16, svg`<path d="M2 11L7.500 5.500l5.500 5.500" fill="none" stroke="#fff" stroke-width="1.500"/>`)}
          ${icon(16, 16, svg`<path d="M2 11.500Q0 11 .7 9.500T3 8q.5-3.500 4-3.800 3 .2 4 3 2.500-.5 3 1.500 2 .3 1.700 2-.2.800-1 .8z" fill="#6f7173"/>`)}
          ${icon(16, 16, svg`<g fill="none" stroke="#f2f2f2" stroke-width="1.300"><rect x="3" y="4.500" width="7.500" height="7" rx="1.500"/><path d="M10.500 8l3-2.500v5L10.500 8M4 1.500Q7 0 10 1.500M4 14.500q3 1.500 6 0"/></g>`)}
          ${icon(16, 16, svg`<g fill="none" stroke="#f2f2f2" stroke-width="1.100"><path d="M5 3.500h10.500V11H4V7M9.500 11v3M6 14.300h7"/><rect x=".5" y="2" width="4" height="4"/><path d="M2.500 6v2"/></g>`)}
          ${icon(16, 16, svg`<g fill="none" stroke="#f2f2f2" stroke-width="1.100"><path d="M0 5.500h2.300L5.500 2.700v10.600L2.300 10.500H0zM7.500 6q1.300 2 0 4M9.500 4.300q2.500 3.700 0 7.400"/><path d="M11.500 3q3.500 5 0 10M13.300 1.800q4 6.200 0 12.400" stroke="#8d8f90"/></g>`)}
        </div>
        <div class="clock">${line("6:44 PM", 42)}${line("16-Oct-25", 52.5)}</div>
        <div class="note">${icon(17, 17, svg`<path d="M.5.500h16v12h-9L4 16v-3.500H.5z" fill="#fff"/><path d="M3 3.700h11M3 6.500h11M3 9.300h6" stroke="#1c1f21" stroke-width="1.100"/><circle cx="12.500" cy="12.500" r="3.800" fill="#fff" stroke="#1c1f21" stroke-width=".8"/><path d="M10.700 14.300l3.600-3.600" stroke="#1c1f21" stroke-width="1.100"/>`)}</div>
        <div class="peek"></div>
      </div>
    </div>`;
  }
}
